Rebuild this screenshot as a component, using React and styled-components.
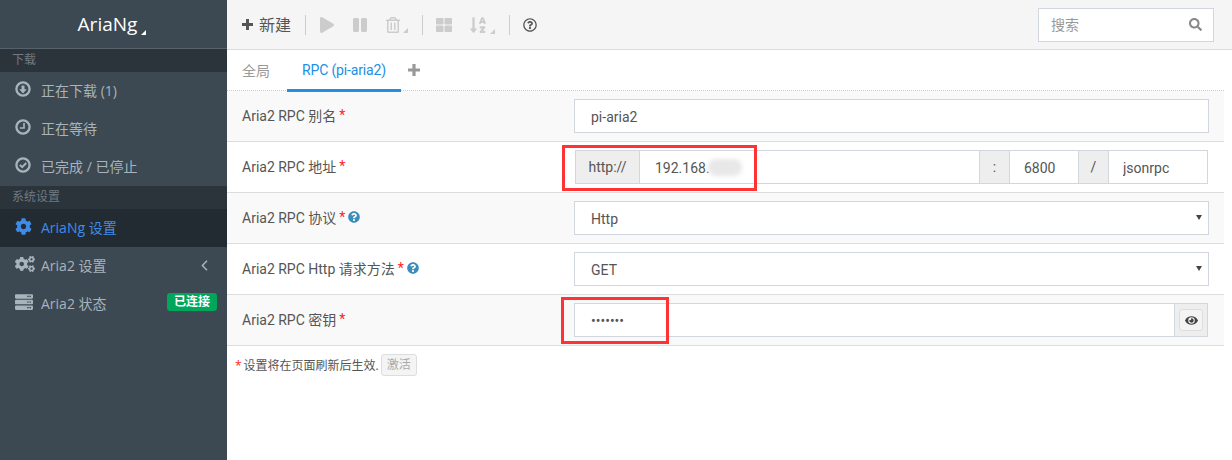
import React from "react";
import styled, { createGlobalStyle } from "styled-components";
import {
  FaPlay,
  FaPause,
  FaRegTrashAlt,
  FaThLarge,
  FaSortAlphaDown,
  FaRegQuestionCircle,
  FaSearch,
  FaEye,
  FaQuestionCircle,
  FaCog,
  FaCogs,
  FaServer
} from "react-icons/fa";

const FONT = `"Open Sans", "Noto Sans CJK SC", sans-serif`;
const FORM_FONT = `Roboto, "Noto Sans CJK SC", sans-serif`;

const GlobalStyle = createGlobalStyle`
  html, body {
    margin: 0;
    padding: 0;
    background: #fff;
    font-family: ${FONT};
  }
  * {
    box-sizing: border-box;
  }
`;

const Page = styled.div`
  display: flex;
  width: 1232px;
  height: 460px;
  overflow: hidden;
  font-size: 14px;
  color: #555;
`;

const Sidebar = styled.aside`
  width: 227px;
  flex: none;
  background: #3c4852;
  color: #a7b4bc;
`;

const Logo = styled.div`
  height: 49px;
  display: flex;
  align-items: center;
  justify-content: center;
  gap: 4px;
  color: #fff;
  font-size: 19px;
  border-bottom: 1px solid #56626b;
  padding-right: 3px;
`;

const Corner = styled.span`
  display: inline-block;
  width: 0;
  height: 0;
  border-style: solid;
  border-width: 0 0 5px 5px;
  border-color: transparent transparent ${(p) => p.$color || "#fff"} transparent;
`;

const LogoCorner = styled(Corner)`
  margin-top: 17px;
`;

const SectionTitle = styled.div`
  height: 23px;
  line-height: 22px;
  padding-left: 12px;
  font-size: 12px;
  color: #6f7a82;
  background: #2c343b;
`;

const NavItem = styled.div`
  height: 38px;
  display: flex;
  align-items: center;
  padding: 0 10px 2px 15px;
  color: ${(p) => (p.$active ? "#3f8bea" : "#a7b4bc")};
  background: ${(p) => (p.$active ? "#222b31" : "transparent")};
  svg {
    flex: none;
  }
`;

const NavIcon = styled.span`
  width: 26px;
  flex: none;
  display: flex;
  align-items: center;
  margin-top: -2px;
  font-size: 16px;
`;

const NavText = styled.span`
  flex: 1;
`;

const NavChevron = styled.svg`
  width: 7px;
  height: 11px;
  margin-right: 9px;
  fill: none;
  stroke: currentColor;
  stroke-width: 1.5;
`;

const Badge = styled.span`
  width: 50px;
  height: 18px;
  line-height: 18px;
  text-align: center;
  border-radius: 3px;
  background: #00a65a;
  color: #fff;
  font-size: 12px;
  font-weight: 700;
  margin-top: -2px;
`;

const Main = styled.main`
  flex: 1;
  min-width: 0;
  display: flex;
  flex-direction: column;
`;

const Toolbar = styled.div`
  height: 50px;
  flex: none;
  display: flex;
  align-items: center;
  background: #f5f5f5;
  border-bottom: 1px solid #dcdcdc;
  padding-right: 18px;
`;

const ToolGroup = styled.div`
  display: flex;
  align-items: center;
  gap: 17px;
  padding: 0 14px 0 ${(p) => (p.$first ? 15 : 13)}px;
  height: 20px;
  border-left: ${(p) => (p.$first ? "none" : "1px solid #ccc")};
`;

const ToolButton = styled.span`
  display: flex;
  align-items: center;
  color: ${(p) => (p.$enabled ? "#555" : "#ccc")};
  font-size: ${(p) => p.$size || 16}px;
`;

const ToolLabel = styled.span`
  font-size: 16px;
  margin-left: 6px;
  line-height: 20px;
`;

const ToolCorner = styled(Corner)`
  align-self: flex-end;
  margin-left: ${(p) => p.$gap}px;
`;

const SearchBox = styled.label`
  margin-left: auto;
  width: 176px;
  height: 34px;
  display: flex;
  align-items: center;
  background: #fff;
  border: 1px solid #d2d6de;
  padding: 0 11px 0 12px;
  color: #888;
`;

const SearchInput = styled.input`
  flex: 1;
  min-width: 0;
  border: 0;
  outline: 0;
  padding: 0;
  font: 14px ${FONT};
  &::placeholder {
    color: #999;
    opacity: 1;
  }
`;

const Tabs = styled.div`
  height: 41px;
  flex: none;
  display: flex;
  margin-right: 8px;
  border-bottom: 1px dotted #ccc;
  font-family: ${FORM_FONT};
`;

const Tab = styled.div`
  height: 42px;
  padding: 0 15px;
  margin-right: 2px;
  display: flex;
  align-items: center;
  font-size: 14px;
  letter-spacing: ${(p) => (p.$active ? "-0.15px" : "0")};
  color: ${(p) => (p.$active ? "#208fe5" : "#999")};
  border-bottom: 3px solid ${(p) => (p.$active ? "#208fe5" : "transparent")};
  position: relative;
`;

const TabAdd = styled.div`
  height: 40px;
  display: flex;
  align-items: center;
  padding-left: 5px;
  color: #999;
`;

const PlusGlyph = styled.svg`
  width: ${(p) => p.$size}px;
  height: ${(p) => p.$size}px;
  fill: currentColor;
  flex: none;
`;

const Form = styled.div`
  margin-right: 8px;
  font-family: ${FORM_FONT};
`;

const Row = styled.div`
  display: flex;
  align-items: center;
  padding: 8px 15px;
  border-bottom: 1px solid #ddd;
  &:nth-child(odd) {
    background: #f9f9f9;
  }
`;

const Label = styled.div`
  width: 332px;
  flex: none;
  margin-top: -3px;
  font-size: 14px;
  color: #555;
  display: flex;
  align-items: center;
  gap: 3px;
`;

const Star = styled.span`
  color: #f22;
`;

const Help = styled.span`
  display: flex;
  color: #3c8dbc;
  font-size: 12px;
`;

const Control = styled.div`
  flex: 1;
  min-width: 0;
  display: flex;
  height: 34px;
  position: relative;
  padding: 0 ${(p) => p.$right || 0}px 0 ${(p) => p.$left || 0}px;
`;

const TextInput = styled.input`
  flex: ${(p) => (p.$width ? "none" : "1")};
  width: ${(p) => (p.$width ? `${p.$width}px` : "auto")};
  min-width: 0;
  height: 34px;
  padding: 2px ${(p) => p.$pad || 16}px 0;
  margin-left: ${(p) => (p.$joined ? "-1px" : "0")};
  border: 1px solid #d2d6de;
  border-radius: 0;
  outline: 0;
  background: #fff;
  color: #555;
  font: 14px ${FORM_FONT};
`;

const Addon = styled.span`
  width: ${(p) => p.$width}px;
  flex: none;
  height: 34px;
  margin-left: ${(p) => (p.$joined ? "-1px" : "0")};
  display: flex;
  align-items: center;
  justify-content: center;
  background: #eee;
  border: 1px solid #d2d6de;
  font-size: 14px;
  color: #555;
`;

const EyeButton = styled.span`
  width: 24px;
  height: 22px;
  display: flex;
  align-items: center;
  justify-content: center;
  background: #f4f4f4;
  border: 1px solid #ddd;
  border-radius: 3px;
  font-size: 13px;
  color: #444;
`;

const SelectWrap = styled.div`
  flex: 1;
  position: relative;
  &::after {
    content: "";
    position: absolute;
    right: 7px;
    top: 14px;
    border-style: solid;
    border-width: 5px 3px 0 3px;
    border-color: #444 transparent transparent transparent;
  }
`;

const Select = styled.select`
  width: 100%;
  height: 34px;
  padding: 2px 16px 0;
  appearance: none;
  border: 1px solid #d2d6de;
  border-radius: 0;
  outline: 0;
  background: #fff;
  color: #555;
  font: 14px ${FORM_FONT};
`;

const Marker = styled.span`
  position: absolute;
  left: ${(p) => p.$left}px;
  top: ${(p) => p.$top}px;
  width: ${(p) => p.$width}px;
  height: ${(p) => p.$height}px;
  border: 3px solid #f33;
  pointer-events: none;
`;

const Smudge = styled.span`
  position: absolute;
  left: 134px;
  top: 9px;
  width: 34px;
  height: 17px;
  border-radius: 8px;
  background: #e8e8e8;
  filter: blur(2px);
`;

const Note = styled.div`
  display: flex;
  align-items: center;
  padding: 8px 0 0 8px;
  font-size: 12px;
  color: #555;
`;

const NoteStar = styled(Star)`
  margin-right: 2px;
`;

const NoteButton = styled.span`
  width: 36px;
  height: 22px;
  line-height: 20px;
  margin-left: 2px;
  text-align: center;
  background: #f4f4f4;
  border: 1px solid #ddd;
  border-radius: 3px;
  color: #aaa;
`;

const required = <Star>*</Star>;

const Plus = ({ size }) => (
  <PlusGlyph $size={size} viewBox="0 0 12 12">
    <path d="M4.4 0h3.2v4.4H12v3.2H7.6V12H4.4V7.6H0V4.4h4.4z" />
  </PlusGlyph>
);

// FontAwesome 5 outlines are thinner than the picture, so the ring icons are drawn here
const Ring = ({ children }) => (
  <svg width="16" height="16" viewBox="0 0 16 16">
    <circle cx="8" cy="8" r="6.6" fill="none" stroke="currentColor" strokeWidth="2.3" />
    {children}
  </svg>
);

const DownloadIcon = () => (
  <Ring>
    <path d="M8 12.4L4.2 8.2h2.3V4.4h3v3.8h2.3z" fill="currentColor" />
  </Ring>
);

const ClockIcon = () => (
  <Ring>
    <path d="M9 4v5H4.8" fill="none" stroke="currentColor" strokeWidth="1.7" />
  </Ring>
);

const CheckIcon = () => (
  <Ring>
    <path d="M4.8 7.8l2.4 2.4 4-4.2" fill="none" stroke="currentColor" strokeWidth="1.9" />
  </Ring>
);

const App = () => (
  <Page>
    <GlobalStyle />
    <Sidebar>
      <Logo>
        AriaNg
        <LogoCorner />
      </Logo>
      <SectionTitle>下载</SectionTitle>
      <NavItem>
        <NavIcon><DownloadIcon /></NavIcon>
        <NavText>正在下载 (1)</NavText>
      </NavItem>
      <NavItem>
        <NavIcon><ClockIcon /></NavIcon>
        <NavText>正在等待</NavText>
      </NavItem>
      <NavItem>
        <NavIcon><CheckIcon /></NavIcon>
        <NavText>已完成 / 已停止</NavText>
      </NavItem>
      <SectionTitle>系统设置</SectionTitle>
      <NavItem $active>
        <NavIcon><FaCog size={17} /></NavIcon>
        <NavText>AriaNg 设置</NavText>
      </NavItem>
      <NavItem>
        <NavIcon><FaCogs size={20} /></NavIcon>
        <NavText>Aria2 设置</NavText>
        <NavChevron viewBox="0 0 7 11">
          <path d="M6 .8L1.4 5.5 6 10.2" />
        </NavChevron>
      </NavItem>
      <NavItem>
        <NavIcon><FaServer size={18} /></NavIcon>
        <NavText>Aria2 状态</NavText>
        <Badge>已连接</Badge>
      </NavItem>
    </Sidebar>
    <Main>
      <Toolbar>
        <ToolGroup $first>
          <ToolButton $enabled>
            <Plus size={11} />
            <ToolLabel>新建</ToolLabel>
          </ToolButton>
        </ToolGroup>
        <ToolGroup>
          <ToolButton><FaPlay /></ToolButton>
          <ToolButton><FaPause /></ToolButton>
          <ToolButton>
            <FaRegTrashAlt />
            <ToolCorner $color="#ccc" $gap={2} />
          </ToolButton>
        </ToolGroup>
        <ToolGroup>
          <ToolButton><FaThLarge /></ToolButton>
          <ToolButton $size={18}>
            <FaSortAlphaDown />
            <ToolCorner $color="#ccc" $gap={3} />
          </ToolButton>
        </ToolGroup>
        <ToolGroup>
          <ToolButton $enabled $size={14}><FaRegQuestionCircle /></ToolButton>
        </ToolGroup>
        <SearchBox>
          <SearchInput placeholder="搜索" />
          <FaSearch size={13} />
        </SearchBox>
      </Toolbar>
      <Tabs>
        <Tab>全局</Tab>
        <Tab $active>RPC (pi-aria2)</Tab>
        <TabAdd><Plus size={12} /></TabAdd>
      </Tabs>
      <Form>
        <Row>
          <Label>Aria2 RPC 别名 {required}</Label>
          <Control>
            <TextInput readOnly value="pi-aria2" />
          </Control>
        </Row>
        <Row>
          <Label>Aria2 RPC 地址 {required}</Label>
          <Control $left={1} $right={1}>
            <Addon $width={65}>http://</Addon>
            <TextInput $joined $pad={15} readOnly value="192.168." />
            <Addon $joined $width={31}>:</Addon>
            <TextInput $joined $pad={14} $width={70} readOnly value="6800" />
            <Addon $joined $width={31}>/</Addon>
            <TextInput $joined $pad={14} $width={100} readOnly value="jsonrpc" />
            <Smudge />
            <Marker $left={-12} $top={-5} $width={195} $height={46} />
          </Control>
        </Row>
        <Row>
          <Label>
            Aria2 RPC 协议 {required}
            <Help><FaQuestionCircle /></Help>
          </Label>
          <Control>
            <SelectWrap>
              <Select defaultValue="Http">
                <option>Http</option>
              </Select>
            </SelectWrap>
          </Control>
        </Row>
        <Row>
          <Label>
            Aria2 RPC Http 请求方法 {required}
            <Help><FaQuestionCircle /></Help>
          </Label>
          <Control>
            <SelectWrap>
              <Select defaultValue="GET">
                <option>GET</option>
              </Select>
            </SelectWrap>
          </Control>
        </Row>
        <Row>
          <Label>Aria2 RPC 密钥 {required}</Label>
          <Control $right={1}>
            <TextInput type="password" readOnly value="1234567" />
            <Addon $joined $width={34}>
              <EyeButton><FaEye /></EyeButton>
            </Addon>
            <Marker $left={-13} $top={-6} $width={108} $height={47} />
          </Control>
        </Row>
      </Form>
      <Note>
        <NoteStar>*</NoteStar>设置将在页面刷新后生效.
        <NoteButton>激活</NoteButton>
      </Note>
    </Main>
  </Page>
);

export default App;
